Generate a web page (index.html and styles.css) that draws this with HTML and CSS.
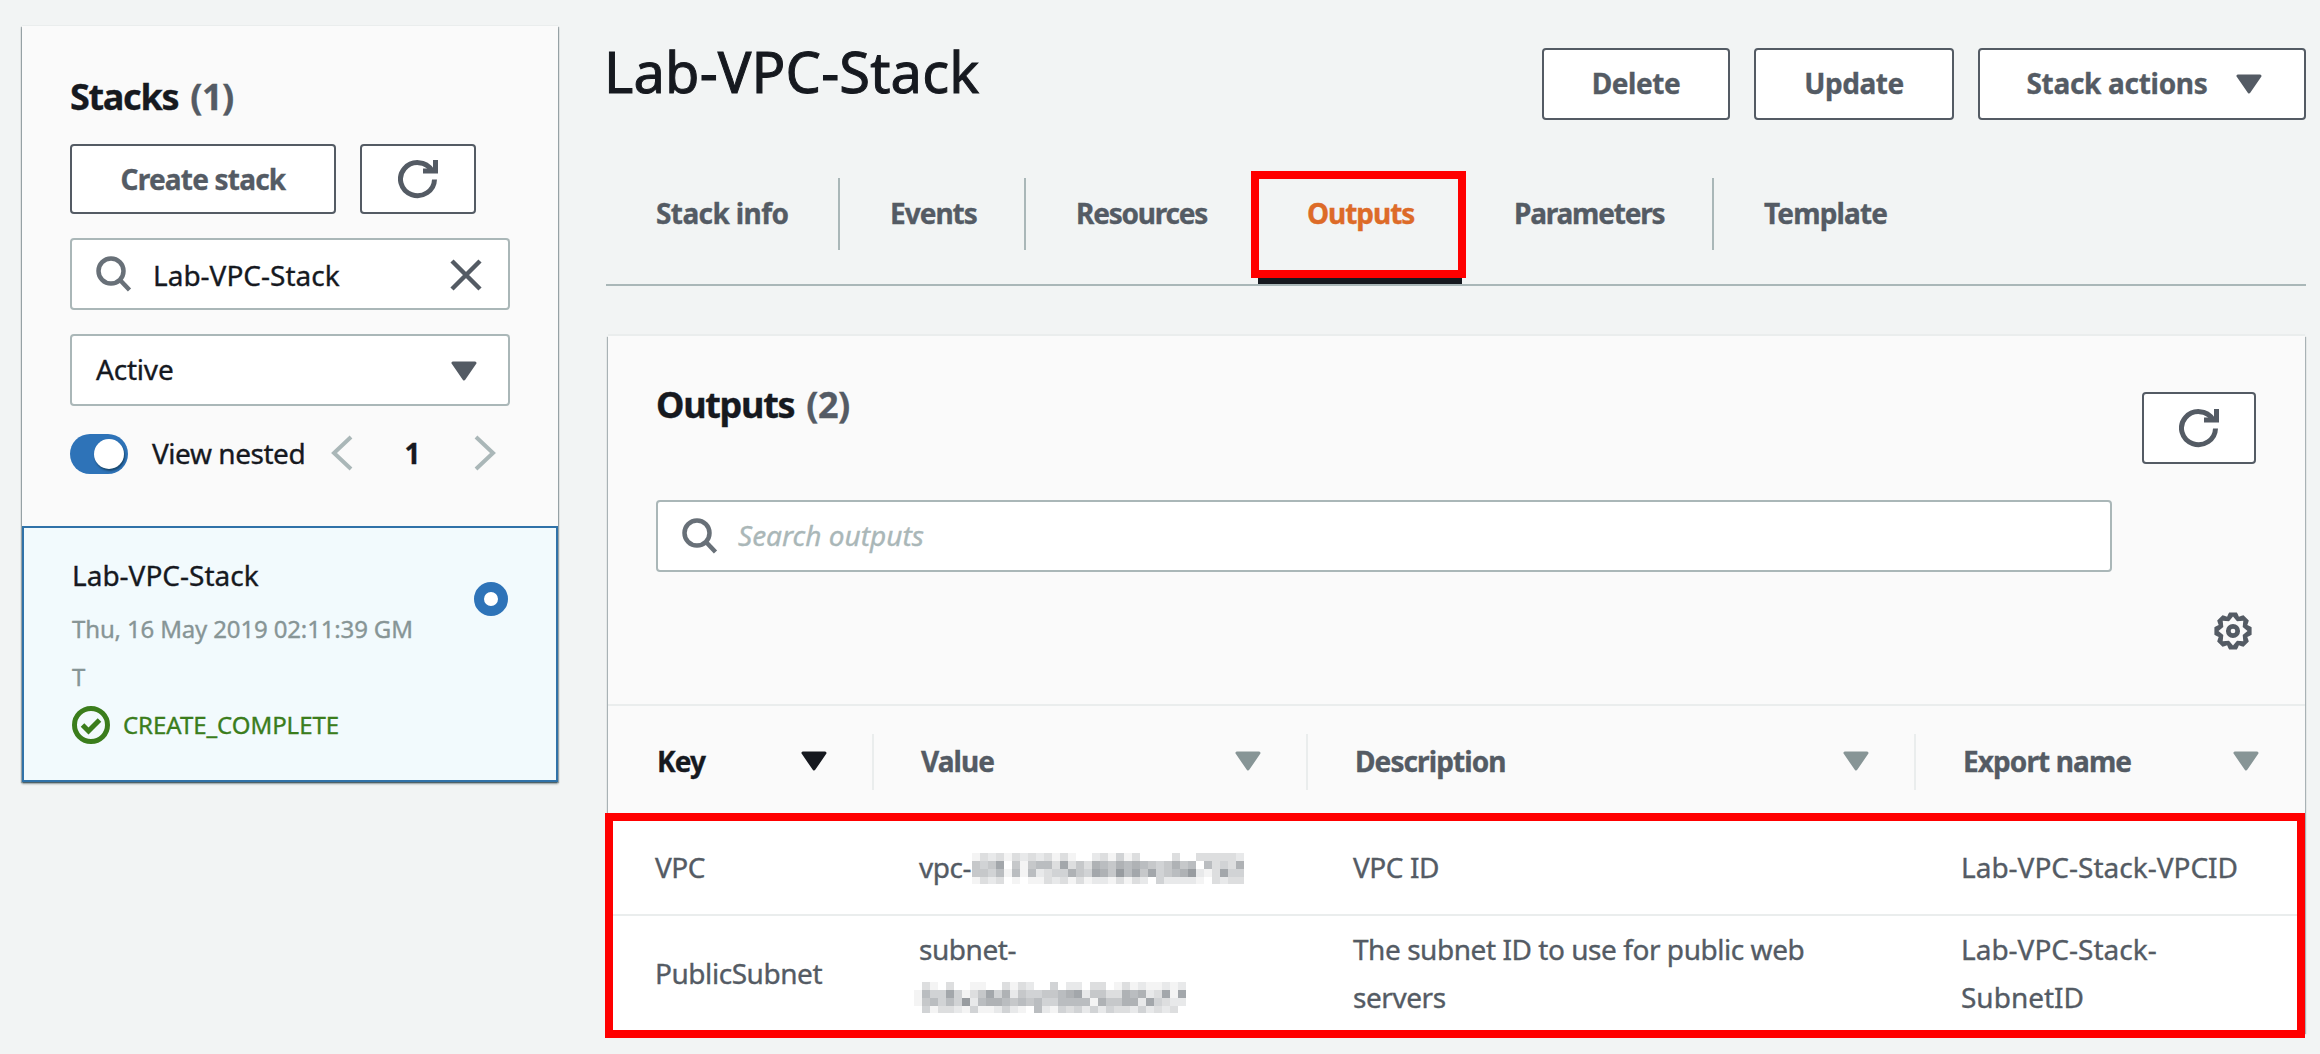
FILE: index.html
```html
<!DOCTYPE html>
<html lang="en">
<head>
<meta charset="utf-8">
<title>CloudFormation - Lab-VPC-Stack</title>
<link rel="stylesheet" href="styles.css">
</head>
<body>
<svg class="defs" aria-hidden="true">
  <symbol id="refresh" viewBox="0 0 40 40"><path d="M36.500 20.500A17 16.500 0 1 1 34 11.500" fill="none" stroke="currentColor" stroke-width="5"/><path d="M37.500 1V12H25" fill="none" stroke="currentColor" stroke-width="5"/></symbol>
  <symbol id="search" viewBox="0 0 36 36"><circle cx="15" cy="15" r="12.500" fill="none" stroke="currentColor" stroke-width="4.500"/><path d="M24 24l9.500 10" stroke="currentColor" stroke-width="4.500"/></symbol>
  <symbol id="caret" viewBox="0 0 26 20"><path d="M2 2H24L13 18Z" fill="currentColor" stroke="currentColor" stroke-width="3" stroke-linejoin="round"/></symbol>
</svg>
<div class="page">
  <aside class="side">
    <div class="side-top">
      <h2 class="h2">Stacks <span class="count">(1)</span></h2>
      <div class="row side-buttons">
        <button class="btn create"><span>Create stack</span></button>
        <button class="btn side-refresh"><svg class="i-refresh"><use href="#refresh"/></svg></button>
      </div>
      <div class="field side-search">
        <svg class="i-search"><use href="#search"/></svg><span class="grow">Lab-VPC-Stack</span>
        <svg class="i-close" viewBox="0 0 32 32"><path d="M2 2L30 30M30 2L2 30" stroke="currentColor" stroke-width="4.500"/></svg>
      </div>
      <div class="field select"><span class="grow">Active</span><svg class="i-caret"><use href="#caret"/></svg></div>
      <div class="row nested">
        <span class="toggle"><span class="knob"></span></span>
        <span class="nested-label">View nested</span>
        <svg class="i-chev" viewBox="0 0 22 36"><path d="M20 2L3 18L20 34" fill="none" stroke="currentColor" stroke-width="4"/></svg>
        <b class="page-no">1</b>
        <svg class="i-chev" viewBox="0 0 22 36"><path d="M2 2L19 18L2 34" fill="none" stroke="currentColor" stroke-width="4"/></svg>
      </div>
    </div>
    <div class="stack">
      <div class="stack-text">
        <div class="stack-name">Lab-VPC-Stack</div>
        <div class="stack-date">Thu, 16 May 2019 02:11:39 GMT</div>
        <div class="status"><svg class="i-ok" viewBox="0 0 38 38"><circle cx="19" cy="19" r="16.500" fill="none" stroke="currentColor" stroke-width="5"/><path d="M10.500 19l6 6 11-11" fill="none" stroke="currentColor" stroke-width="5"/></svg><span>CREATE_COMPLETE</span></div>
      </div>
      <span class="radio"></span>
    </div>
  </aside>
  <main class="main">
    <header class="head">
      <h1 class="h1">Lab-VPC-Stack</h1>
      <button class="btn b-delete"><span>Delete</span></button>
      <button class="btn b-update"><span>Update</span></button>
      <button class="btn b-actions"><span>Stack actions</span><svg class="i-caret"><use href="#caret"/></svg></button>
    </header>
    <nav class="tabs">
      <a class="tab t1"><span>Stack info</span></a>
      <a class="tab t2"><span>Events</span></a>
      <a class="tab t3"><span>Resources</span></a>
      <a class="tab t4 active"><span>Outputs</span></a>
      <a class="tab t5"><span>Parameters</span></a>
      <a class="tab t6"><span>Template</span></a>
    </nav>
    <section class="panel">
      <div class="panel-top">
        <div class="row panel-head">
          <h2 class="h2">Outputs <span class="count">(2)</span></h2>
          <button class="btn panel-refresh"><svg class="i-refresh"><use href="#refresh"/></svg></button>
        </div>
        <div class="field outputs-search"><svg class="i-search"><use href="#search"/></svg><span class="hint">Search outputs</span></div>
        <svg class="i-gear" id="gear" viewBox="-20 -20 40 40"></svg>
      </div>
      <div class="grid thead">
        <div class="th sorted"><span>Key</span><svg class="i-caret"><use href="#caret"/></svg></div>
        <div class="th"><span>Value</span><svg class="i-caret"><use href="#caret"/></svg></div>
        <div class="th"><span>Description</span><svg class="i-caret"><use href="#caret"/></svg></div>
        <div class="th"><span>Export name</span><svg class="i-caret"><use href="#caret"/></svg></div>
      </div>
      <div class="tbody">
        <div class="grid tr r1">
          <div>VPC</div><div class="masked"><span class="prefix">vpc-</span><svg class="mosaic" data-id="vpc"></svg></div><div>VPC ID</div><div class="export">Lab-VPC-Stack-VPCID</div>
        </div>
        <div class="grid tr r2">
          <div>PublicSubnet</div><div>subnet-<br><svg class="mosaic m2" data-id="subnet"></svg></div><div class="desc">The subnet ID to use for public web servers</div><div class="export">Lab-VPC-Stack-<br>SubnetID</div>
        </div>
      </div>
    </section>
  </main>
</div>
<script src="app.js"></script>
</body>
</html>
```

FILE: styles.css
```css
* { box-sizing: border-box; }
body { margin: 0; background: #f2f4f4; color: #16191f; font: 28px/48px "Noto Sans", "Open Sans", sans-serif; -webkit-text-stroke: .35px; }
.defs { position: absolute; width: 0; height: 0; }
svg { display: block; flex: none; }
.page { display: flex; gap: 48px; height: 1054px; padding: 26px 14px 0 22px; overflow: hidden; }
.row { display: flex; align-items: center; }
.grow { flex: 1; }
.h1, .h2 { margin: 0; }
.h1 { flex: 1; margin-left: -2px; font-size: 56px; font-weight: 400; line-height: 70px; letter-spacing: .15px; -webkit-text-stroke: 1px; }
.h2 { font-size: 36px; font-weight: 700; line-height: 44px; letter-spacing: -1.300px; }
.count { margin-left: 4px; color: #545b64; font-weight: 700; letter-spacing: -.5px; }

.btn { display: flex; align-items: center; justify-content: center; height: 72px; padding: 0 0 2px; border: 2px solid #545b64; border-radius: 4px; background: #fff; color: #545b64; font: 700 28px/48px "Noto Sans", sans-serif; letter-spacing: -.45px; }
.field { display: flex; align-items: center; height: 72px; border: 2px solid #aab7b8; border-radius: 4px; background: #fff; padding: 0 26px 0 24px; }
.i-refresh { width: 40px; height: 40px; color: #545b64; }
.i-search { width: 36px; height: 36px; color: #687078; margin-right: 21px; }
.i-close { width: 32px; height: 32px; color: #545b64; }
.i-caret { width: 26px; height: 20px; color: #545b64; }
.i-chev { width: 22px; height: 36px; color: #aab7b8; }

.side { width: 536px; height: 756px; flex: none; background: #fafafa; box-shadow: 0 -1px 0 #eaeded, 0 2px 2px rgba(0, 28, 36, .35), 1px 1px 1px rgba(0, 28, 36, .3), -1px 1px 1px rgba(0, 28, 36, .3); }
.side-top { height: 500px; padding: 49px 48px 0; }
.side-buttons { gap: 24px; margin: 25px 0 24px; }
.side-buttons .btn { height: 70px; padding-bottom: 0; }
.create { width: 266px; }
.side-buttons .create { letter-spacing: -.8px; }
.side-refresh { width: 116px; }
.side-search .grow { padding-top: 1px; }
.side-search .i-close { margin-top: 2px; }
.select { margin-top: 24px; padding-right: 31px; letter-spacing: -.2px; }
.select .grow { padding-bottom: 2px; }
.select .i-caret { margin-top: 2px; }
.nested { margin-top: 24px; height: 48px; }
.toggle { width: 58px; height: 40px; border-radius: 20px; background: #2e73b8; padding: 5px 5px 5px 24px; }
.knob { display: block; width: 30px; height: 30px; border-radius: 50%; background: #fff; box-shadow: 1px 2px 2px rgba(0, 28, 36, .5); }
.nested-label { margin-left: 24px; padding-bottom: 2px; width: 179px; letter-spacing: -.45px; }
.nested .i-chev { margin-top: -2px; }
.page-no { width: 119px; margin-right: 2px; padding-bottom: 2px; text-align: center; }

.stack { display: flex; height: 256px; border: 2px solid #3072a8; background: #f2fafd; padding: 23px 48px 0; }
.stack-text { width: 354px; margin-right: 48px; }
.stack-name { height: 54px; }
.stack-date { width: 346px; color: #879596; font-size: 24px; letter-spacing: -.15px; word-break: break-all; }
.status { display: flex; align-items: center; gap: 13px; height: 48px; color: #3b7d1c; font-size: 24px; letter-spacing: -.05px; }
.i-ok { width: 38px; height: 38px; }
.radio { width: 34px; height: 34px; margin-top: 31px; border: 10px solid #2e73b8; border-radius: 50%; background: #fff; flex: none; }

.main { width: 1700px; flex: none; }
.head { display: flex; gap: 24px; height: 94px; padding-top: 22px; }
.head .h1 { margin-top: -12px; }
.b-delete { width: 188px; margin-left: -24px; }
.b-update { width: 200px; }
.b-actions { width: 328px; gap: 28px; padding-left: 4px; letter-spacing: -.3px; }
.b-actions .i-caret { margin-top: 1px; }
.tabs { display: flex; height: 166px; padding-top: 58px; border-bottom: 2px solid #aab7b8; color: #545b64; font-weight: 700; letter-spacing: -.85px; }
.tab { height: 72px; padding: 11px 0 0 50px; border-right: 2px solid #aab7b8; }
.t1 { width: 234px; letter-spacing: -.6px; }
.t2 { width: 186px; letter-spacing: -1px; }
.t3 { width: 232px; border-color: transparent; letter-spacing: -1.200px; }
.t4 { position: relative; width: 206px; padding-left: 49px; border: 0; color: #dd6b28; letter-spacing: -1.050px; }
.t5 { width: 250px; letter-spacing: -1.200px; }
.t6 { border: 0; }
.t4::before { content: ""; position: absolute; left: 0; top: 98px; width: 204px; height: 8px; background: #16191f; }
.t4::after { content: ""; position: absolute; box-sizing: border-box; left: -7px; top: -7px; width: 215px; height: 107px; border: 8px solid #f00; }

.panel { width: 1697px; height: 697px; margin: 50px 0 0 2px; background: #fff; box-shadow: 0 -2px 0 #eaeded, 1px 1px 1px rgba(0, 28, 36, .3), -1px 1px 1px rgba(0, 28, 36, .3); }
.panel-top { height: 370px; padding: 56px 49px 0 48px; background: #fafafa; border-bottom: 2px solid #eaeded; }
.panel-head { height: 72px; justify-content: space-between; }
.panel-head .h2 { margin-top: -46px; }
.panel-refresh { width: 114px; padding-bottom: 0; }
.outputs-search { width: 1456px; margin-top: 36px; }
.hint { margin-left: -1px; color: #aab7b8; font-style: italic; padding-bottom: 2px; }
.i-gear { width: 40px; height: 40px; margin: 39px 3px 0 auto; color: #545b64; }
.grid { display: grid; grid-template-columns: 266px 434px 608px 389px; }
.thead { height: 107px; padding-top: 28px; background: #fafafa; color: #545b64; font-weight: 700; letter-spacing: -.9px; }
.th { display: flex; justify-content: space-between; height: 56px; padding: 3px 45px 0 47px; border-right: 2px solid #eaeded; }
.th:first-child { padding-left: 49px; }
.th:last-child { padding-right: 46px; border: 0; }
.th .i-caret { margin-top: 14px; color: #879596; }
.sorted, .th.sorted .i-caret { color: #16191f; }
.tbody { width: 1700px; height: 225px; margin-left: -3px; border: 8px solid #f00; background: #fff; color: #545b64; letter-spacing: -.45px; }
.tr { grid-template-columns: 260px 434px 608px 382px; align-items: center; }
.tr > div { padding-left: 46px; }
.tr > div:first-child { padding-left: 42px; }
.tr > .desc { padding-right: 60px; }
.tr > .export { letter-spacing: 0; }
.r1 { height: 95px; padding-bottom: 1px; border-bottom: 2px solid #eaeded; }
.r2 { height: 114px; }
.masked { display: flex; }
.prefix { width: 53px; }
.mosaic { width: 272px; height: 31px; margin-top: 10px; shape-rendering: crispEdges; }
.m2 { margin: 9px 0 8px -5px; }
```

FILE: app.js
```js
// Gear: eight-toothed outline with a star-shaped opening and a round hub.
const ring = steps => {
  const pts = [];
  for (let i = 0; i < 8; i++) {
    const a = i * Math.PI / 4 - Math.PI / 2;
    for (const [d, r] of steps) {
      pts.push((Math.cos(a + d) * r).toFixed(1) + ' ' + (Math.sin(a + d) * r).toFixed(1));
    }
  }
  return 'M' + pts.join('L') + 'Z';
};
document.getElementById('gear').innerHTML =
  `<path d="${ring([[-.27, 17.5], [-.2, 19], [.2, 19], [.27, 17.5], [.3927, 15.5]])}${ring([[0, 14.5], [.3927, 10.5]])}" fill="currentColor" fill-rule="evenodd"/>` +
  `<circle r="4.700" fill="none" stroke="currentColor" stroke-width="4.700"/>`;

// Pixelated masks over the resource IDs: one digit per 8px cell, 0 = white, 9 = darkest.
const masks = {
  vpc: [
    '1323132323131002314130000300333332',
    '5458051566383537657676545756063437',
    '5546161623447548759685845679213844',
    '1323010113231312213132042222103233'
  ],
  subnet: [
    '0310300110031320040220330131211212',
    '1644841358472544556782553376723818',
    '1564649267765656446666175577284322',
    '0413321411242106214342424332423230'
  ]
};
document.querySelectorAll('.mosaic').forEach(svg => {
  svg.innerHTML = masks[svg.dataset.id].map((row, y) => [...row].map((d, x) => {
    const v = 255 - d * 11;
    return `<rect x="${x * 8}" y="${y * 8}" width="8" height="8" fill="rgb(${v - (d >> 1)},${v},${v + (d >> 1)})"/>`;
  }).join('')).join('');
});
```
